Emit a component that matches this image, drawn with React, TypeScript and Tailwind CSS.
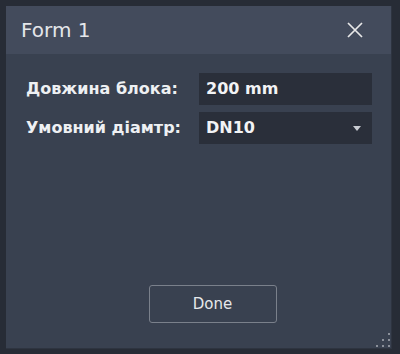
const font = { fontFamily: "'DejaVu Sans', Verdana, sans-serif" };

function Field({ label, children }: { label: string; children: React.ReactNode }) {
  return (
    <div className="flex items-center">
      <div className="w-[193px] pl-[20px] text-[16px] font-bold text-[#eef0f3]">{label}</div>
      <div className="flex h-[32px] w-[173px] items-center bg-[#2a2f3a] px-[7px] text-[16px] font-bold text-[#f2f3f5]">
        {children}
      </div>
    </div>
  );
}

export default function App() {
  return (
    <div className="h-[354px] w-[400px] bg-[#272c36] pt-[6px] pl-[6px]" style={font}>
      <div className="flex h-[343px] w-[386px] flex-col border-r border-b border-[#2e3440] bg-[#394150]">
        {/* title bar */}
        <div className="flex h-[48px] items-center justify-between bg-[#434b5c] pl-[15px] pr-[28px]">
          <span className="text-[20px] text-[#e4e6ea]">Form 1</span>
          <svg width="16" height="16" viewBox="0 0 16 16">
            <path d="M1 1L15 15M15 1L1 15" stroke="#e8e8e8" strokeWidth="1.7" />
          </svg>
        </div>

        {/* fields */}
        <div className="flex flex-col gap-[7px] pt-[19px]">
          <Field label="Довжина блока:">200 mm</Field>
          <Field label="Умовний діамтр:">
            <span className="flex-1">DN10</span>
            <svg width="8" height="5" viewBox="0 0 8 5" className="mr-[4px]">
              <path d="M0 0h8L4 5z" fill="#c9ccd2" />
            </svg>
          </Field>
        </div>

        <div className="flex-1" />

        {/* footer */}
        <div className="relative flex justify-center pb-[25px]">
          <button className="ml-[28px] h-[38px] w-[128px] rounded-[3px] border border-[#7a808b] text-[15px] text-[#e6e8eb]">
            Done
          </button>
          {/* resize grip */}
          <svg width="14" height="14" viewBox="0 0 14 14" className="absolute right-[1px] bottom-[1px]">
            <rect x="12" y="0" width="2" height="2" fill="#8b909a" />
            <rect x="6" y="6" width="2" height="2" fill="#8b909a" />
            <rect x="12" y="6" width="2" height="2" fill="#8b909a" />
            <rect x="0" y="12" width="2" height="2" fill="#8b909a" />
            <rect x="6" y="12" width="2" height="2" fill="#8b909a" />
            <rect x="12" y="12" width="2" height="2" fill="#8b909a" />
          </svg>
        </div>
      </div>
    </div>
  );
}
